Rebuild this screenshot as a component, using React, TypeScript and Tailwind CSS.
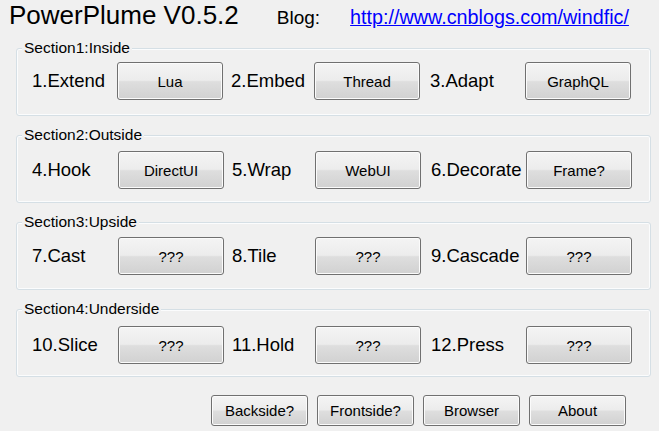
import { ReactNode } from "react"

interface Item {
  label: string
  button: string
}

interface SectionProps {
  title: string
  items: Item[]
  padTop: string
  firstWidth: string
}

function WinButton({ children, size = "row" }: { children: ReactNode; size?: "row" | "bar" }) {
  const dims = size === "row" ? "h-[38px] w-[106px]" : "h-[31px] w-[97px]"
  return (
    <button
      className={`${dims} shrink-0 rounded-[3px] border border-[#707070] bg-[linear-gradient(to_bottom,#f4f4f4_0%,#ececec_48%,#dedede_52%,#d1d1d1_100%)] shadow-[inset_0_0_0_1px_#fbfbfb] text-[15px] leading-none text-black`}
    >
      {children}
    </button>
  )
}

function Section({ title, items, padTop, firstWidth }: SectionProps) {
  return (
    <div className="relative ml-[16px] h-[68px] w-[635px] rounded-[3px] border border-[#d5dfe5] shadow-[inset_0_0_0_1px_#fbfcfd]">
      <span className="absolute left-[5px] top-[-10px] bg-[#f0f0f0] px-[2px] text-[15.5px] leading-[18px] text-black">
        {title}
      </span>
      <div className={`flex items-center pl-[15px] ${padTop}`}>
        <span className={`${firstWidth} shrink-0 text-[18.5px] text-black`}>{items[0].label}</span>
        <WinButton>{items[0].button}</WinButton>
        <span className="ml-[8px] w-[83px] shrink-0 whitespace-nowrap text-[18.5px] text-black">{items[1].label}</span>
        <WinButton>{items[1].button}</WinButton>
        <span className="ml-[10px] w-[95px] shrink-0 whitespace-nowrap text-[18.5px] text-black">{items[2].label}</span>
        <WinButton>{items[2].button}</WinButton>
      </div>
    </div>
  )
}

const sections: SectionProps[] = [
  {
    title: "Section1:Inside",
    padTop: "pt-[13px]",
    firstWidth: "w-[85px]",
    items: [
      { label: "1.Extend", button: "Lua" },
      { label: "2.Embed", button: "Thread" },
      { label: "3.Adapt", button: "GraphQL" },
    ],
  },
  {
    title: "Section2:Outside",
    padTop: "pt-[15px]",
    firstWidth: "w-[86px]",
    items: [
      { label: "4.Hook", button: "DirectUI" },
      { label: "5.Wrap", button: "WebUI" },
      { label: "6.Decorate", button: "Frame?" },
    ],
  },
  {
    title: "Section3:Upside",
    padTop: "pt-[14px]",
    firstWidth: "w-[86px]",
    items: [
      { label: "7.Cast", button: "???" },
      { label: "8.Tile", button: "???" },
      { label: "9.Cascade", button: "???" },
    ],
  },
  {
    title: "Section4:Underside",
    padTop: "pt-[16px]",
    firstWidth: "w-[86px]",
    items: [
      { label: "10.Slice", button: "???" },
      { label: "11.Hold", button: "???" },
      { label: "12.Press", button: "???" },
    ],
  },
]

export default function App() {
  return (
    <div className="h-[431px] w-[659px] overflow-hidden bg-[#f0f0f0] font-['Liberation_Sans',Arial,sans-serif] text-black">
      <div className="flex h-[30px] items-baseline pl-[9px]">
        <span className="text-[26px] leading-[30px]">PowerPlume V0.5.2</span>
        <span className="ml-[38px] text-[19px]">Blog:</span>
        <a href="#" className="ml-[30px] text-[19.75px] text-[#0000ff] underline">
          http://www.cnblogs.com/windfic/
        </a>
      </div>

      <div className="mt-[18px] flex flex-col gap-[19px]">
        {sections.map((s) => (
          <Section key={s.title} {...s} />
        ))}
      </div>

      <div className="mt-[18px] flex gap-[9px] pl-[211px]">
        <WinButton size="bar">Backside?</WinButton>
        <WinButton size="bar">Frontside?</WinButton>
        <WinButton size="bar">Browser</WinButton>
        <WinButton size="bar">About</WinButton>
      </div>
    </div>
  )
}
